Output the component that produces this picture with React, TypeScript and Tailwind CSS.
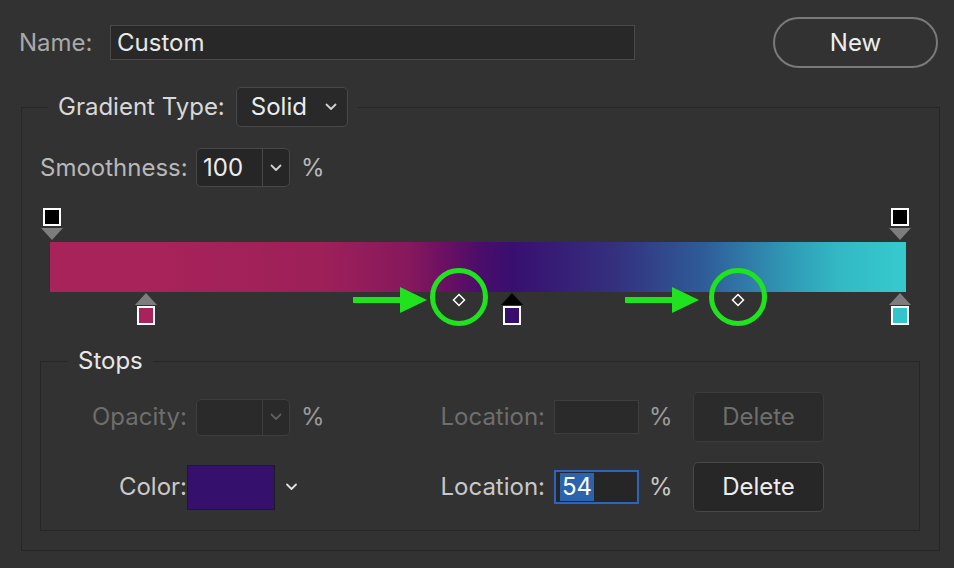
function Chevron({ className }: { className?: string }) {
  return (
    <svg viewBox="0 0 12 8" className={className} fill="none" stroke="currentColor" strokeWidth={1.8} strokeLinecap="round" strokeLinejoin="round">
      <path d="M1.5 1.5 6 6l4.5-4.5" />
    </svg>
  );
}

function Triangle({ up, color }: { up?: boolean; color: string }) {
  return (
    <svg width="22" height="12" viewBox="0 0 22 12" className="block">
      <polygon points={up ? "11,0 22,12 0,12" : "0,0 22,0 11,12"} fill={color} />
    </svg>
  );
}

function Diamond({ className }: { className: string }) {
  return (
    <svg width="14" height="14" viewBox="0 0 14 14" className={className}>
      <polygon points="7,1.5 12.5,7 7,12.5 1.5,7" fill="none" stroke="#fff" strokeWidth={1.5} />
    </svg>
  );
}

function Arrow({ className }: { className: string }) {
  return (
    <svg width="74" height="26" viewBox="0 0 74 26" className={className}>
      <rect x="0" y="10" width="50" height="6" fill="#1fe31f" />
      <polygon points="47,0 74,13 47,26" fill="#1fe31f" />
    </svg>
  );
}

export default function App() {
  return (
    <div className="h-[568px] w-[954px] overflow-hidden bg-[#323232] font-['Inter','Liberation_Sans',sans-serif] text-[24px] leading-none">
      {/* name row */}
      <div className="flex items-center pt-[17px]">
        <span className="ml-[19px] w-[91px] text-[#a9a9a9]">Name:</span>
        <div className="flex h-[35px] w-[525px] items-center border border-[#4a4a4a] bg-[#282828] pl-[6px] text-[#e8e8e8]">Custom</div>
        <button type="button" className="ml-[138px] h-[51px] w-[165px] rounded-full border-2 border-[#7a7a7a] text-[#ededed]">
          New
        </button>
      </div>

      <fieldset className="ml-[21px] mt-[19px] w-[919px] border border-[#262626] p-0">
        <legend className="ml-[26px] px-[10px]">
          <div className="flex items-center">
            <span className="text-[#d8d8d8]">Gradient Type:</span>
            <div className="ml-[11px] flex h-[40px] w-[112px] items-center justify-between rounded-[5px] border border-[#484848] bg-[#292929] pl-[14px] pr-[10px] text-[#ececec]">
              Solid
              <Chevron className="h-[8px] w-[12px] text-[#d0d0d0]" />
            </div>
          </div>
        </legend>

        {/* smoothness */}
        <div className="mt-[21px] flex items-center pl-[18px]">
          <span className="w-[147px] text-[#b8b8b8]">Smoothness:</span>
          <div className="ml-[9px] flex h-[39px] w-[94px] rounded-[5px] border border-[#484848] bg-[#262626]">
            <div className="flex w-[65px] items-center pl-[6px] text-[#ededed]">100</div>
            <div className="flex flex-1 items-center justify-center border-l border-[#484848]">
              <Chevron className="h-[8px] w-[12px] text-[#cfcfcf]" />
            </div>
          </div>
          <span className="ml-[11px] text-[#b8b8b8]">%</span>
        </div>

        {/* gradient editor */}
        <div className="relative ml-[28px] mt-[21px] h-[120px] w-[856px] pt-[34px]">
          <div className="h-[50px] w-full bg-[linear-gradient(90deg,#a8235a_11%,#9d2058_32%,#86185d_42%,#6c1062_46%,#4c0d6a_50%,#380f70_54%,#34307e_66%,#2f5a98_76%,#2f72a4_80%,#2f98b4_86%,#33b8c4_92%,#35c8cc_99%)]" />

          {/* top (opacity) stops */}
          <div className="absolute left-[-9px] top-0 flex w-[22px] flex-col items-center">
            <div className="h-[18px] w-[18px] border-2 border-white bg-black" />
            <div className="mt-[2px]"><Triangle color="#7d7d7d" /></div>
          </div>
          <div className="absolute left-[839px] top-0 flex w-[22px] flex-col items-center">
            <div className="h-[18px] w-[18px] border-2 border-white bg-black" />
            <div className="mt-[2px]"><Triangle color="#7d7d7d" /></div>
          </div>

          {/* bottom (color) stops */}
          <div className="absolute left-[85px] top-[85px] flex w-[22px] flex-col items-center">
            <Triangle up color="#7d7d7d" />
            <div className="mt-[1px] h-[19px] w-[18px] border-2 border-white bg-[#a72359]" />
          </div>
          <div className="absolute left-[451px] top-[85px] flex w-[22px] flex-col items-center">
            <Triangle up color="#000" />
            <div className="mt-[1px] h-[19px] w-[18px] border-2 border-white bg-[#360f6e]" />
          </div>
          <div className="absolute left-[839px] top-[85px] flex w-[22px] flex-col items-center">
            <Triangle up color="#7d7d7d" />
            <div className="mt-[1px] h-[19px] w-[18px] border-2 border-white bg-[#34c5cc]" />
          </div>

          {/* midpoints */}
          <Diamond className="absolute left-[402px] top-[85px]" />
          <Diamond className="absolute left-[681px] top-[85px]" />

          {/* annotations */}
          <div className="absolute left-[380px] top-[60px] h-[58px] w-[58px] rounded-full border-[5px] border-[#1fe31f]" />
          <div className="absolute left-[659px] top-[60px] h-[58px] w-[58px] rounded-full border-[5px] border-[#1fe31f]" />
          <Arrow className="absolute left-[303px] top-[79px]" />
          <Arrow className="absolute left-[575px] top-[79px]" />
        </div>

        {/* stops */}
        <fieldset className="mb-[19px] ml-[18px] mt-[20px] w-[880px] border border-[#272727] p-0 pb-[18px]">
          <legend className="ml-[27px] px-[10px] leading-[26px] text-[#e8e8e8]">Stops</legend>

          <div className="mt-[18px] flex h-[50px] items-center">
            <div className="flex w-[391px] items-center">
              <span className="w-[146px] text-right text-[#6e6e6e]">Opacity:</span>
              <div className="ml-[9px] flex h-[37px] w-[94px] rounded-[5px] border border-[#3e3e3e] bg-[#2a2a2a]">
                <div className="w-[65px]" />
                <div className="flex flex-1 items-center justify-center border-l border-[#3e3e3e]">
                  <Chevron className="h-[8px] w-[12px] text-[#5e5e5e]" />
                </div>
              </div>
              <span className="ml-[11px] text-[#9a9a9a]">%</span>
            </div>
            <span className="w-[113px] text-right text-[#6e6e6e]">Location:</span>
            <div className="ml-[9px] h-[34px] w-[85px] border border-[#3e3e3e] bg-[#2a2a2a]" />
            <span className="ml-[10px] w-[19px] text-[#9a9a9a]">%</span>
            <button type="button" className="ml-[25px] h-[50px] w-[131px] rounded-[5px] border border-[#3c3c3c] bg-[#2b2b2b] text-[#6e6e6e]">
              Delete
            </button>
          </div>

          <div className="mt-[20px] flex h-[50px] items-center">
            <div className="flex w-[391px] items-center">
              <span className="w-[146px] text-right text-[#cacaca]">Color:</span>
              <div className="h-[45px] w-[88px] border border-[#1d1d1d] bg-[#35106c]" />
              <Chevron className="ml-[10px] h-[8px] w-[13px] text-[#e0e0e0]" />
            </div>
            <span className="w-[113px] text-right text-[#c8c8c8]">Location:</span>
            <div className="ml-[9px] flex h-[34px] w-[85px] items-center border-2 border-[#2c64c0] bg-[#262626] pl-[4px]">
              <span className="flex h-[28px] items-center bg-[#2b63ad] px-[2px] text-white">54</span>
            </div>
            <span className="ml-[10px] w-[19px] text-[#c8c8c8]">%</span>
            <button type="button" className="ml-[25px] h-[50px] w-[131px] rounded-[5px] border border-[#484848] bg-[#272727] text-[#ededed]">
              Delete
            </button>
          </div>
        </fieldset>
      </fieldset>
    </div>
  );
}
